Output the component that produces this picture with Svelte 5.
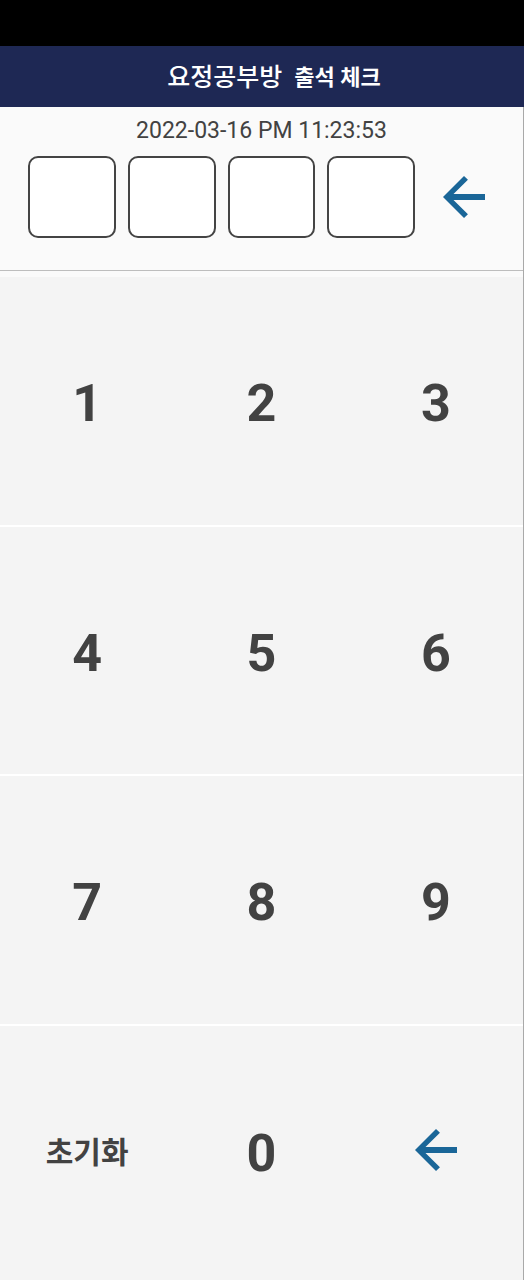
<script>
  let digits = $state([]);
  const keys = ['1', '2', '3', '4', '5', '6', '7', '8', '9'];
  function press(key) {
    if (digits.length < 4) digits.push(key);
  }
  function back() {
    digits.pop();
  }
  function clear() {
    digits = [];
  }
</script>

{#snippet arrow()}
  <svg viewBox="4 4 16 16" aria-hidden="true">
    <path d="M20 10.900H8l5.500-5.500L12 4l-8 8 8 8 1.500-1.400L8 13.100H20z" />
  </svg>
{/snippet}

<div class="app">
  <div class="status"></div>
  <header>
    <h1><span>요정공부방</span><span>출석 체크</span></h1>
  </header>
  <section class="entry">
    <time datetime="2022-03-16T23:23:53">2022-03-16 PM 11:23:53</time>
    <div class="code">
      {#each [0, 1, 2, 3] as i}
        <input type="text" inputmode="numeric" readonly aria-label={`${i + 1}`} value={digits[i] ?? ''} />
      {/each}
      <button class="back" aria-label="←" onclick={back}>{@render arrow()}</button>
    </div>
  </section>
  <main>
    {#each keys as key}
      <button class="digit ruled" onclick={() => press(key)}>{key}</button>
    {/each}
    <button class="reset" onclick={clear}>초기화</button>
    <button class="digit" onclick={() => press('0')}>0</button>
    <button aria-label="←" onclick={back}>{@render arrow()}</button>
  </main>
</div>

<style>
  :global(body) {
    margin: 0;
    background: #f4f4f4;
  }
  .app {
    box-sizing: border-box;
    display: flex;
    flex-direction: column;
    min-height: 100vh;
    border-right: 1px solid #a9a9a9;
    background: #fafafa;
    color: #424242;
    font-family: Roboto, "Noto Sans CJK KR", sans-serif;
  }
  .status {
    height: 46px;
    margin-right: -1px;
    background: #000;
  }
  header {
    box-sizing: border-box;
    display: flex;
    align-items: center;
    justify-content: center;
    height: 61px;
    margin-right: -1px;
    padding: 2px 0 0 24px;
    background: #1e2854;
    color: #fff;
  }
  h1 {
    display: flex;
    align-items: center;
    gap: 12px;
    margin: 0;
    font-size: 22px;
    line-height: 32px;
    font-weight: 700;
  }
  h1 span:first-child {
    font-size: 25px;
    font-weight: 500;
  }
  .entry {
    box-sizing: border-box;
    height: 164px;
    border-bottom: 1px solid #bdbdbd;
  }
  time {
    display: block;
    padding-top: 9px;
    text-align: center;
    font-size: 23px;
    line-height: 30px;
  }
  .code {
    display: grid;
    grid-template-columns: repeat(4, 1fr) 74px;
    gap: 12px;
    padding: 10px 22px 0 28px;
  }
  input {
    box-sizing: border-box;
    width: 100%;
    min-width: 0;
    height: 82px;
    padding: 0;
    border: 2px solid #444;
    border-radius: 10px;
    background: #fff;
    color: inherit;
    font: 700 40px Roboto, sans-serif;
    text-align: center;
  }
  button {
    display: grid;
    place-items: center;
    padding: 0;
    border: 0;
    background: none;
    color: inherit;
    font: inherit;
    cursor: pointer;
  }
  svg {
    width: 42px;
    height: 42px;
    fill: #1a6698;
  }
  main {
    flex: 1;
    display: grid;
    grid-template-columns: repeat(3, 1fr);
    grid-auto-rows: 1fr;
    margin-top: 6px;
    padding-bottom: 5px;
    background: #f4f4f4;
    font-size: 52px;
    font-weight: 700;
  }
  .digit {
    padding-top: 6px;
  }
  .ruled {
    border-bottom: 2px solid #fff;
  }
  .reset {
    font-size: 30px;
  }
</style>
